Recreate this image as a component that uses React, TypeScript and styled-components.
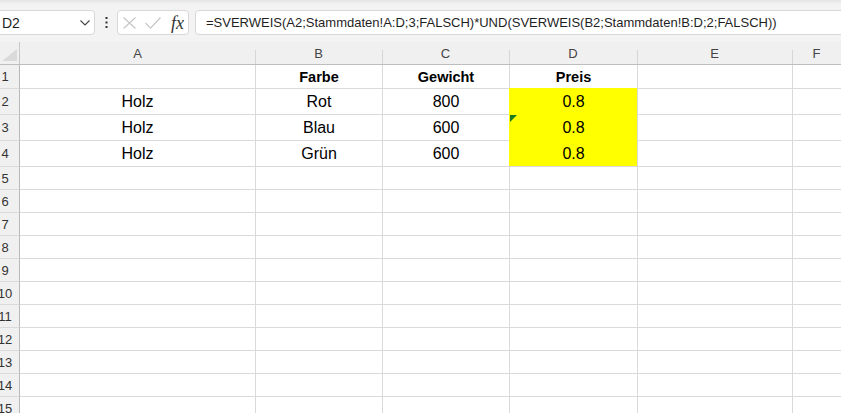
import styled, { createGlobalStyle } from 'styled-components';

const GlobalStyle = createGlobalStyle`
  html, body {
    margin: 0;
    padding: 0;
    background: #ffffff;
    font-family: "Liberation Sans", Arial, sans-serif;
  }
`;

// column widths: row header, A, B, C, D, E, F
const COLUMNS = '20px 235px 127px 127px 128px 155px 1fr';
const LETTERS = ['A', 'B', 'C', 'D', 'E', 'F'];

type CellData = { text?: string; bold?: boolean; fill?: string; flag?: boolean };
type RowData = { n: number; h: number; cells: CellData[] };

const YELLOW = '#ffff00';

const rows: RowData[] = [
  { n: 1, h: 23, cells: [{}, { text: 'Farbe', bold: true }, { text: 'Gewicht', bold: true }, { text: 'Preis', bold: true }, {}, {}] },
  { n: 2, h: 26, cells: [{ text: 'Holz' }, { text: 'Rot' }, { text: '800' }, { text: '0.8', fill: YELLOW }, {}, {}] },
  { n: 3, h: 26, cells: [{ text: 'Holz' }, { text: 'Blau' }, { text: '600' }, { text: '0.8', fill: YELLOW, flag: true }, {}, {}] },
  { n: 4, h: 26, cells: [{ text: 'Holz' }, { text: 'Grün' }, { text: '600' }, { text: '0.8', fill: YELLOW }, {}, {}] },
  ...Array.from({ length: 11 }, (_, i) => ({ n: i + 5, h: 23, cells: [{}, {}, {}, {}, {}, {}] })),
];

const Sheet = styled.div`
  width: 100%;
  height: 100vh;
  overflow: hidden;
  background: #fff;
`;

// Start of formula bar
const Toolbar = styled.div`
  height: 42px;
  box-sizing: border-box;
  display: flex;
  align-items: flex-start;
  padding-top: 10px;
  background: linear-gradient(#e3e3e3 0, #ececec 2px, #f3f3f3 4px);
`;

const NameBox = styled.div`
  margin-left: -6px;
  width: 101px;
  height: 25px;
  box-sizing: border-box;
  display: flex;
  align-items: center;
  justify-content: space-between;
  padding: 0 4px 0 7px;
  background: #fff;
  border: 1px solid #d8d8d8;
  border-radius: 4px;
  font-size: 14px;
  color: #1f1f1f;
`;

const Dots = styled.div`
  width: 22px;
  height: 25px;
  display: flex;
  align-items: center;
  justify-content: center;
`;

const FxBox = styled.div`
  width: 72px;
  height: 25px;
  box-sizing: border-box;
  display: flex;
  align-items: center;
  padding-left: 5px;
  background: #fff;
  border: 1px solid #d8d8d8;
  border-radius: 4px;
`;

const FxLabel = styled.span`
  margin-left: 10px;
  font-family: "Liberation Serif", "Times New Roman", serif;
  font-style: italic;
  font-size: 18px;
  color: #333;
  line-height: 1;
`;

const FormulaBox = styled.div`
  margin-left: 6px;
  flex: 1;
  margin-right: -10px;
  height: 25px;
  box-sizing: border-box;
  display: flex;
  align-items: center;
  padding-left: 10px;
  background: #fff;
  border: 1px solid #d8d8d8;
  border-radius: 4px;
  font-size: 13px;
  color: #1f1f1f;
  white-space: nowrap;
  overflow: hidden;
`;
// End of formula bar

// Start of grid
const Row = styled.div<{ $h: number }>`
  display: grid;
  grid-template-columns: ${COLUMNS};
  height: ${(p) => p.$h}px;
`;

const HeaderRow = styled(Row)`
  background: #f0f0f0;
  border-bottom: 1px solid #bdbdbd;
  box-sizing: content-box;
`;

const Corner = styled.div`
  box-sizing: border-box;
  border-right: 1px solid #c8c8c8;
  display: flex;
  align-items: flex-end;
  justify-content: flex-end;
  padding: 0 2px 3px 0;
`;

const ColHead = styled.div<{ $first?: boolean }>`
  display: flex;
  align-items: center;
  justify-content: center;
  font-size: 13px;
  color: #444;
  background: ${(p) =>
    p.$first ? 'none' : 'linear-gradient(#d6d6d6, #d6d6d6) left 8px / 1px calc(100% - 8px) no-repeat'};
`;

const RowHead = styled.div<{ $top: boolean }>`
  box-sizing: border-box;
  overflow: hidden;
  position: relative;
  background: #f0f0f0;
  border-right: 1px solid #b8b8b8;
  border-top: ${(p) => (p.$top ? '1px solid #dadada' : 'none')};
  font-size: 13px;
  color: #333;
  display: flex;
  align-items: center;

  span {
    flex: none;
    width: 30px;
    margin-left: -10px;
    text-align: center;
  }
`;

const Cell = styled.div<{ $first: boolean; $top: boolean; $bold?: boolean; $fill?: string }>`
  box-sizing: border-box;
  position: relative;
  display: flex;
  align-items: center;
  justify-content: center;
  background: ${(p) => p.$fill || '#fff'};
  border-left: ${(p) => (p.$first ? 'none' : `1px solid ${p.$fill || '#dadada'}`)};
  border-top: ${(p) => (p.$top ? `1px solid ${p.$fill || '#dadada'}` : 'none')};
  font-size: ${(p) => (p.$bold ? '14.5px' : '16px')};
  font-weight: ${(p) => (p.$bold ? 700 : 400)};
  padding-top: ${(p) => (p.$bold ? 0 : 1)}px;
  color: #000;
  white-space: nowrap;
`;

const ErrorFlag = styled.div`
  position: absolute;
  left: 0;
  top: 0;
  width: 0;
  height: 0;
  border-top: 7px solid #1b7a1b;
  border-right: 7px solid transparent;
`;
// End of grid

export default function App() {
  return (
    <Sheet>
      <GlobalStyle />
      <Toolbar>
        <NameBox>
          <span>D2</span>
          <svg width="10" height="6" viewBox="0 0 10 6">
            <polyline points="0.5,0.5 5,5 9.5,0.5" fill="none" stroke="#444" strokeWidth="1.1" />
          </svg>
        </NameBox>
        <Dots>
          <svg width="3" height="11" viewBox="0 0 3 11">
            <rect x="0.5" y="0" width="2" height="2" fill="#333" />
            <rect x="0.5" y="4.5" width="2" height="2" fill="#333" />
            <rect x="0.5" y="9" width="2" height="2" fill="#333" />
          </svg>
        </Dots>
        <FxBox>
          <svg width="13" height="12" viewBox="0 0 13 12">
            <path d="M0.5 0.5 L12.5 11.5 M12.5 0.5 L0.5 11.5" stroke="#c4c4c4" strokeWidth="1.1" fill="none" />
          </svg>
          <svg width="16" height="12" viewBox="0 0 16 12" style={{ marginLeft: 9 }}>
            <polyline points="0.5,6 5.5,11.2 15.5,0.5" stroke="#c4c4c4" strokeWidth="1.1" fill="none" />
          </svg>
          <FxLabel>fx</FxLabel>
        </FxBox>
        <FormulaBox>=SVERWEIS(A2;Stammdaten!A:D;3;FALSCH)*UND(SVERWEIS(B2;Stammdaten!B:D;2;FALSCH))</FormulaBox>
      </Toolbar>

      <HeaderRow $h={22}>
        <Corner>
          <svg width="15" height="12" viewBox="0 0 15 12">
            <polygon points="15,0 15,12 0,12" fill="#dadada" />
          </svg>
        </Corner>
        {LETTERS.map((l, i) => (
          <ColHead key={l} $first={i === 0}>{l}</ColHead>
        ))}
      </HeaderRow>

      {rows.map((r) => (
        <Row key={r.n} $h={r.h}>
          <RowHead $top={r.n > 1}><span>{r.n}</span></RowHead>
          {r.cells.map((c, i) => (
            <Cell key={i} $first={i === 0} $top={r.n > 1} $bold={c.bold} $fill={c.fill}>
              {c.flag && <ErrorFlag />}
              {c.text}
            </Cell>
          ))}
        </Row>
      ))}
    </Sheet>
  );
}
